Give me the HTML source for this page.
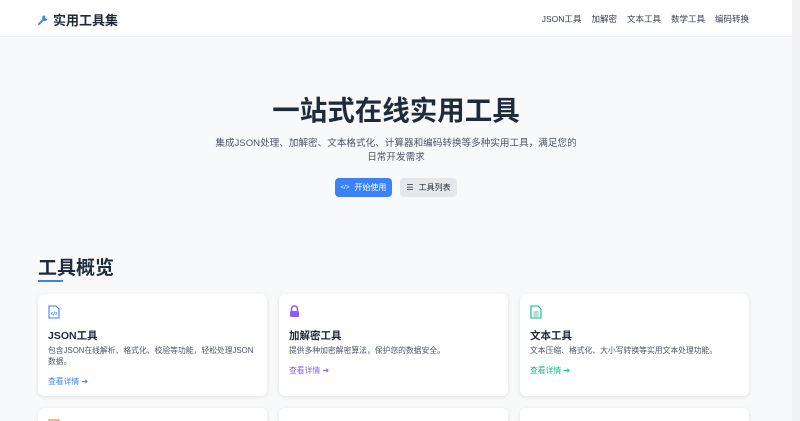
<!DOCTYPE html>
<html><head><meta charset="utf-8"><style>
*{margin:0;padding:0;box-sizing:border-box}
html{width:800px;height:421px;overflow:hidden}
body{width:800px;height:421px;overflow:hidden;background:#f8f9fb;font-family:"Liberation Sans","Noto Sans CJK SC",sans-serif;color:#1f2937;position:relative}
.sb{position:absolute;right:0;top:0;width:8px;height:421px;background:#f1f1f1}
header{height:37px;background:#fff;border-bottom:1px solid #eceef1;position:relative}
.logo{position:absolute;left:38px;top:10px;font-size:13px;font-weight:bold;color:#1f2937;display:flex;align-items:center;gap:4px}
nav{position:absolute;right:51px;top:13px;font-size:8.5px;color:#374151;display:flex;gap:10px}
h1{position:absolute;left:0;width:792px;top:88px;text-align:center;font-size:27.5px;font-weight:bold;color:#1f2a3a}
.sub{position:absolute;left:0;width:792px;top:137px;text-align:center;font-size:9.6px;line-height:13.5px;color:#4b5563}
.btns{position:absolute;top:178px;left:0;width:792px;display:flex;justify-content:center;gap:8px}
.b{height:19px;border-radius:4px;font-size:8px;display:flex;align-items:center;justify-content:center;gap:5px;white-space:nowrap;width:57px}
.b1{background:#3b82f6;color:#fff}
.b2{background:#e5e7eb;color:#1f2937}
h2{position:absolute;left:38px;top:257px;font-size:19px;font-weight:bold;color:#1f2a3a;line-height:24px}
.ul{position:absolute;left:38px;top:280px;width:25px;height:2px;background:#3b82f6}
.card{position:absolute;width:229px;height:102px;background:#fff;border-radius:6px;box-shadow:0 1px 4px rgba(0,0,0,.1);overflow:hidden}
.card svg{position:absolute;left:10px;top:11px}
.card h3{position:absolute;left:10px;top:34px;font-size:10.5px;font-weight:bold}
.card p{position:absolute;left:10px;right:12px;top:51px;font-size:7.8px;line-height:11px;color:#4b5563}
.card a{position:absolute;left:10px;font-size:7.8px;text-decoration:none}
.r2{height:13px;border-radius:6px 6px 0 0}
</style></head><body>
<header>
<div class="logo"><svg width="11" height="11" viewBox="0 0 12 12"><path d="M1 11 L6 6" stroke="#3b82f6" stroke-width="2" stroke-linecap="round"/><path d="M7 1.5a3 3 0 1 0 3.5 3.5l-1.5.5-1.5-1.5.5-1.5z" fill="#3b82f6"/></svg>实用工具集</div>
<nav><span>JSON工具</span><span>加解密</span><span>文本工具</span><span>数学工具</span><span>编码转换</span></nav>
</header>
<h1>一站式在线实用工具</h1>
<div class="sub">集成JSON处理、加解密、文本格式化、计算器和编码转换等多种实用工具，满足您的<br>日常开发需求</div>
<div class="btns"><div class="b b1"><span style="font-size:6px">&lt;/&gt;</span>开始使用</div><div class="b b2"><span style="font-size:8px">☰</span>工具列表</div></div>
<h2>工具概览</h2><div class="ul"></div>
<div class="card" style="left:38px;top:294px">
<svg width="12" height="14" viewBox="0 0 12 14"><path d="M1 1h7l3 3v9H1z" fill="none" stroke="#3b82f6" stroke-width="1.1"/><path d="M4.5 7l-1.3 1.3 1.3 1.3M7.5 7l1.3 1.3-1.3 1.3M6.5 6.5l-1 4" fill="none" stroke="#3b82f6" stroke-width=".8"/></svg>
<h3>JSON工具</h3><p>包含JSON在线解析、格式化、校验等功能，轻松处理JSON数据。</p><a style="top:82px;color:#3b82f6">查看详情 ➔</a></div>
<div class="card" style="left:279px;top:294px">
<svg width="11" height="13" viewBox="0 0 11 13"><path d="M2.5 6V4a3 3 0 0 1 6 0v2" fill="none" stroke="#8b5cf6" stroke-width="1.5"/><rect x="1" y="6" width="9" height="6" rx="1" fill="#8b5cf6"/></svg>
<h3>加解密工具</h3><p>提供多种加密解密算法，保护您的数据安全。</p><a style="top:71px;color:#8b5cf6">查看详情 ➔</a></div>
<div class="card" style="left:520px;top:294px">
<svg width="12" height="14" viewBox="0 0 12 14"><path d="M1 1h7l3 3v9H1z" fill="none" stroke="#10b981" stroke-width="1.1"/><path d="M3.5 7h5M3.5 9h5M3.5 11h5" stroke="#10b981" stroke-width=".8"/></svg>
<h3>文本工具</h3><p>文本压缩、格式化、大小写转换等实用文本处理功能。</p><a style="top:71px;color:#10b981">查看详情 ➔</a></div>
<div class="card r2" style="left:38px;top:408px"><svg width="12" height="14"><rect x="1" y="1" width="10" height="12" fill="none" stroke="#f97316" stroke-width="1.1"/></svg></div>
<div class="card r2" style="left:279px;top:408px"></div>
<div class="card r2" style="left:520px;top:408px"></div>
<div class="sb"></div>
</body></html>
